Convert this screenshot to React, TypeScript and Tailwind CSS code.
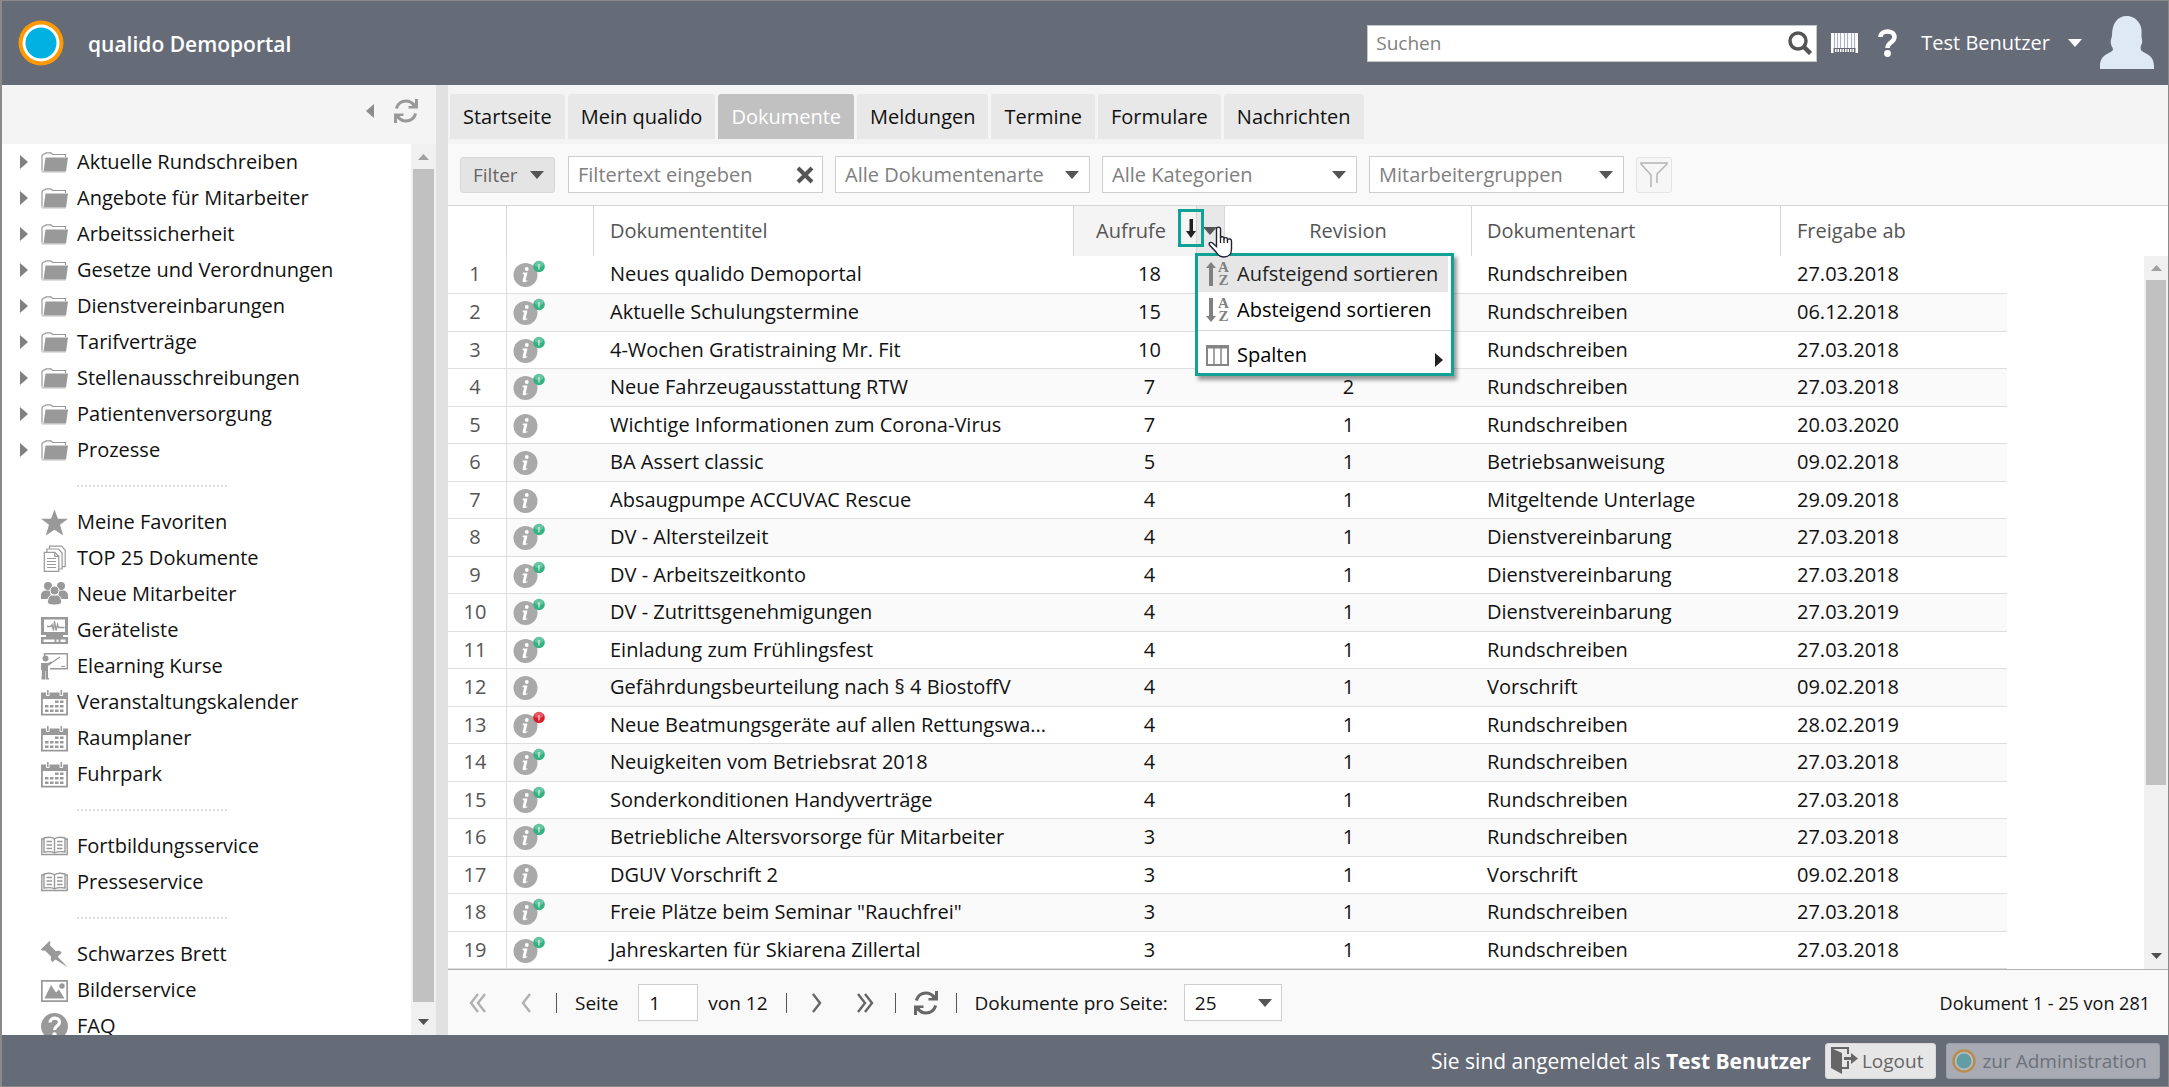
import { useState, type ReactNode } from 'react';

type TreeIconName =
  | 'star'
  | 'documents'
  | 'users'
  | 'device'
  | 'teacher'
  | 'calendar'
  | 'book'
  | 'pin'
  | 'image'
  | 'question';

type TreeItem = { label: string; icon: TreeIconName };

type DocumentRow = {
  title: string;
  views: number;
  revision?: number;
  type: string;
  date: string;
  badge?: 'green' | 'red';
};

const FOLDERS = [
  'Aktuelle Rundschreiben',
  'Angebote für Mitarbeiter',
  'Arbeitssicherheit',
  'Gesetze und Verordnungen',
  'Dienstvereinbarungen',
  'Tarifverträge',
  'Stellenausschreibungen',
  'Patientenversorgung',
  'Prozesse'
];

const TREE_GROUPS: TreeItem[][] = [
  [
    { label: 'Meine Favoriten', icon: 'star' },
    { label: 'TOP 25 Dokumente', icon: 'documents' },
    { label: 'Neue Mitarbeiter', icon: 'users' },
    { label: 'Geräteliste', icon: 'device' },
    { label: 'Elearning Kurse', icon: 'teacher' },
    { label: 'Veranstaltungskalender', icon: 'calendar' },
    { label: 'Raumplaner', icon: 'calendar' },
    { label: 'Fuhrpark', icon: 'calendar' }
  ],
  [
    { label: 'Fortbildungsservice', icon: 'book' },
    { label: 'Presseservice', icon: 'book' }
  ],
  [
    { label: 'Schwarzes Brett', icon: 'pin' },
    { label: 'Bilderservice', icon: 'image' },
    { label: 'FAQ', icon: 'question' }
  ]
];

const TABS = ['Startseite', 'Mein qualido', 'Dokumente', 'Meldungen', 'Termine', 'Formulare', 'Nachrichten'];

const DOCUMENTS: DocumentRow[] = [
  { title: 'Neues qualido Demoportal', views: 18, type: 'Rundschreiben', date: '27.03.2018', badge: 'green' },
  { title: 'Aktuelle Schulungstermine', views: 15, type: 'Rundschreiben', date: '06.12.2018', badge: 'green' },
  { title: '4-Wochen Gratistraining Mr. Fit', views: 10, type: 'Rundschreiben', date: '27.03.2018', badge: 'green' },
  { title: 'Neue Fahrzeugausstattung RTW', views: 7, revision: 2, type: 'Rundschreiben', date: '27.03.2018', badge: 'green' },
  { title: 'Wichtige Informationen zum Corona-Virus', views: 7, revision: 1, type: 'Rundschreiben', date: '20.03.2020' },
  { title: 'BA Assert classic', views: 5, revision: 1, type: 'Betriebsanweisung', date: '09.02.2018' },
  { title: 'Absaugpumpe ACCUVAC Rescue', views: 4, revision: 1, type: 'Mitgeltende Unterlage', date: '29.09.2018' },
  { title: 'DV - Altersteilzeit', views: 4, revision: 1, type: 'Dienstvereinbarung', date: '27.03.2018', badge: 'green' },
  { title: 'DV - Arbeitszeitkonto', views: 4, revision: 1, type: 'Dienstvereinbarung', date: '27.03.2018', badge: 'green' },
  { title: 'DV - Zutrittsgenehmigungen', views: 4, revision: 1, type: 'Dienstvereinbarung', date: '27.03.2019', badge: 'green' },
  { title: 'Einladung zum Frühlingsfest', views: 4, revision: 1, type: 'Rundschreiben', date: '27.03.2018', badge: 'green' },
  { title: 'Gefährdungsbeurteilung nach § 4 BiostoffV', views: 4, revision: 1, type: 'Vorschrift', date: '09.02.2018' },
  { title: 'Neue Beatmungsgeräte auf allen Rettungswa...', views: 4, revision: 1, type: 'Rundschreiben', date: '28.02.2019', badge: 'red' },
  { title: 'Neuigkeiten vom Betriebsrat 2018', views: 4, revision: 1, type: 'Rundschreiben', date: '27.03.2018', badge: 'green' },
  { title: 'Sonderkonditionen Handyverträge', views: 4, revision: 1, type: 'Rundschreiben', date: '27.03.2018', badge: 'green' },
  { title: 'Betriebliche Altersvorsorge für Mitarbeiter', views: 3, revision: 1, type: 'Rundschreiben', date: '27.03.2018', badge: 'green' },
  { title: 'DGUV Vorschrift 2', views: 3, revision: 1, type: 'Vorschrift', date: '09.02.2018' },
  { title: 'Freie Plätze beim Seminar "Rauchfrei"', views: 3, revision: 1, type: 'Rundschreiben', date: '27.03.2018', badge: 'green' },
  { title: 'Jahreskarten für Skiarena Zillertal', views: 3, revision: 1, type: 'Rundschreiben', date: '27.03.2018', badge: 'green' }
];

function FolderIcon() {
  return (
    <svg viewBox="0 0 27 21" className="h-[21px] w-[27px] shrink-0" aria-hidden="true">
      <path d="M1 18V3.500L2.500 2H4l1-1.200h5L11.500 2.500H24.500V5" fill="none" stroke="#999" strokeWidth="1.200" />
      <path d="M4.500 5.500H27L25 19.500H2.500z" fill="#999" />
      <path d="M1 17v3h23.500" fill="none" stroke="#bbb" strokeWidth="1" />
    </svg>
  );
}

const TREE_DRAWINGS: Record<TreeIconName, ReactNode> = {
  star: <path d="M13.500 .5l3.400 9.200H27l-8 6 3.200 10.800-8.700-5.800-8.700 5.800L8 15.700 0 9.700h10.100z" />,
  documents: (
    <g fill="#fff" stroke="#999" strokeWidth="1.200">
      <path d="M8.600 1.200h12l3.600 4v16.500H8.600z" />
      <path d="M6 4h11.500l3.600 4v16H6z" />
      <path d="M3.300 7.300h10.500l4 4v15H3.300z" />
      <path d="M13.800 7.300v4h4M6 13.500h9M6 16.500h9M6 19.500h9M6 22.500h9" fill="none" />
    </g>
  ),
  users: (
    <g>
      <circle cx="7" cy="5" r="4" />
      <circle cx="20" cy="5" r="4" />
      <path d="M0 18v-3.500C0 11 2.500 9.500 5 9.500h4l1 8.500zM27 18v-3.500c0-3.500-2.500-5-5-5h-4L17 18z" />
      <g stroke="#fff" strokeWidth="1">
        <path d="M6.500 21.500C6.500 16 9 14 11.500 14h4c2.500 0 5 2 5 7.500 0 1.500-3 2.500-7 2.500s-7-1-7-2.500z" />
        <circle cx="13.500" cy="9.500" r="4.500" />
      </g>
    </g>
  ),
  device: (
    <g>
      <path fillRule="evenodd" d="M0 0h27v18H0zM3 2.500v12.500h21V2.500z" />
      <path d="M6 9.500h4l1-2 1.500 6L13.500 4l1.500 9.500 1.500-6 1 3h6" fill="none" stroke="#999" strokeWidth="1.300" />
      <path d="M5 18h17v2H5z" />
      <path fillRule="evenodd" d="M0 20h27v7H0zM2.500 22.500V25h11v-2.500zM15.500 22.500V25h2v-2.500zM19.500 22.500V25h5v-2.500z" />
    </g>
  ),
  teacher: (
    <g>
      <path d="M3.500 3V.7h22.800v15H9" fill="none" stroke="#999" strokeWidth="1.400" />
      <path d="M8 11.500L19 4M20 13.500h4" fill="none" stroke="#999" strokeWidth="1.200" />
      <circle cx="4.500" cy="5.500" r="3" />
      <path d="M0 10h7l3-1.500 1 1.500-4 3V25h1v1.500H4.500V18H4v8.500H.5L1 17H0z" />
    </g>
  ),
  calendar: (
    <g>
      <path fillRule="evenodd" d="M0 3.500h27v23H0zM1.800 10v14.700h23.400V10z" />
      <g stroke="#fff" strokeWidth="1">
        <path d="M5.500 .5h2.600v6H5.500zM19 .5h2.600v6H19z" />
      </g>
      <path d="M14 11.500h3.500V14H14zM19 11.500h3.500V14H19zM4 16h3.500v2.500H4zM9 16h3.500v2.500H9zM14 16h3.500v2.500H14zM19 16h3.500v2.500H19zM4 20.500h3.500V23H4zM9 20.500h3.500V23H9zM14 20.500h3.500V23H14zM19 20.500h3.500V23H19z" />
    </g>
  ),
  book: (
    <g fill="none" stroke="#999" strokeWidth="1.400">
      <path d="M3 6H.8v15.500h25.400V6H24" />
      <path d="M3 5c4-1 8-1 10.500.8C16 4 20 4 24 5v14c-4-.6-8-.6-10.500 1C11 18.400 7 18.400 3 19z" />
      <path d="M13.500 5.800V20M5.500 8.500h5.500M5.500 12h5.500M5.500 15.500h5.500M16 8.500h5.500M16 12h5.500M16 15.500h5.500" />
    </g>
  ),
  pin: <path d="M8.500 0l1 1.500-.8 2.500 6 6 4-.3 2 2-4 4L27 26.500 14.500 18.500 11.500 21 9.700 19l.3-3.500L4 9.500l-3 .3L0 8.300z" />,
  image: (
    <g>
      <path fillRule="evenodd" d="M0 3h27v22H0zM1.700 4.700v18.600h23.600V4.700z" />
      <path d="M3.500 21.500L10 8l5 7.500 3-3 5.500 9z" />
      <circle cx="21" cy="9" r="2.700" />
    </g>
  ),
  question: (
    <g>
      <circle cx="13.500" cy="13.500" r="13.500" />
      <path d="M9 9.500c.2-6 10-5.500 9.500 0-.3 3.500-5 3.500-5 7.500" fill="none" stroke="#fff" strokeWidth="3.200" />
      <circle cx="13.500" cy="21.500" r="2.200" fill="#fff" />
    </g>
  )
};

function TreeIcon({ name }: { name: TreeIconName }) {
  return (
    <svg viewBox="0 0 27 27" className="size-[27px] shrink-0" fill="#999" aria-hidden="true">
      {TREE_DRAWINGS[name]}
    </svg>
  );
}

function Caret({ className = 'text-[#555]' }: { className?: string }) {
  return (
    <svg viewBox="0 0 14 8" className={`h-2 w-3.5 shrink-0 ${className}`} fill="currentColor" aria-hidden="true">
      <path d="M0 0h14L7 8z" />
    </svg>
  );
}

function RefreshIcon({ className }: { className: string }) {
  return (
    <svg viewBox="0 0 24 24" className={`size-6 ${className}`} aria-hidden="true">
      <path d="M2.300 9.500C3.800 4.800 7.500 2 12 2c3.300 0 6 1.500 8 4M21.700 14.500C20.200 19.200 16.500 22 12 22c-3.300 0-6-1.500-8-4" fill="none" stroke="currentColor" strokeWidth="3" />
      <path d="M24 0v9.500h-9.500V7h3L21 4V0zM0 24v-9.500h9.500V17h-3L3 20v4z" fill="currentColor" />
    </svg>
  );
}

function Chevrons({ left, double }: { left?: boolean; double?: boolean }) {
  return (
    <svg
      viewBox="0 0 20 20"
      className={`size-5 ${left ? 'text-[#b0b0b0]' : 'text-[#666]'}`}
      fill="none"
      stroke="currentColor"
      strokeWidth="2.400"
      aria-hidden="true"
    >
      {double ? (
        <path d={left ? 'M10 1L3 10l7 9M17 1l-7 9 7 9' : 'M3 1l7 9-7 9M10 1l7 9-7 9'} />
      ) : (
        <path d={left ? 'M14 1L7 10l7 9' : 'M6 1l7 9-7 9'} />
      )}
    </svg>
  );
}

function InfoIcon({ badge }: { badge?: 'green' | 'red' }) {
  return (
    <svg viewBox="0 0 32 28" className="h-7 w-8" aria-hidden="true">
      <circle cx="12.500" cy="15" r="12" fill="#a9a9a9" />
      <circle cx="13.800" cy="9" r="1.900" fill="#fff" />
      <path d="M9.800 12.500h4.700l-1.800 7.500c-.2 1 .5.800 1.600.2l.3.900c-2.500 1.700-5.400 1.500-4.900-.9l1.500-6H9.500z" fill="#fff" />
      {badge && (
        <g>
          <circle cx="26" cy="6.500" r="5.800" fill={badge === 'green' ? '#35b184' : '#d8202c'} />
          <ellipse cx="26" cy="4" rx="4.500" ry="3" fill="#fff" opacity=".25" />
          <path d="M26 4v5.500" stroke="#fff" strokeWidth="1.400" opacity=".7" />
        </g>
      )}
    </svg>
  );
}

function PortalLogo({ className }: { className: string }) {
  return (
    <svg viewBox="0 0 46 46" className={className} aria-hidden="true">
      <circle cx="23" cy="23" r="22.500" fill="#f90" />
      <circle cx="23" cy="23" r="18.500" fill="#fff" />
      <circle cx="23" cy="23" r="15.500" fill="#00b1e1" />
    </svg>
  );
}

function SortIcon({ ascending }: { ascending?: boolean }) {
  return (
    <span className="flex w-[23px] shrink-0 items-center gap-0.5 text-[#808080]">
      <svg viewBox="0 0 10 24" className="h-6 w-2.5 shrink-0" fill="currentColor" aria-hidden="true">
        <path d={ascending ? 'M5 0l5 6H7v18H3V6H0z' : 'M5 24l5-6H7V0H3v18H0z'} />
      </svg>
      <span
        className="flex flex-col items-center font-['Liberation_Serif',serif] text-[15px] leading-[13px] font-bold"
        aria-hidden="true"
      >
        <span>A</span>
        <span>Z</span>
      </span>
    </span>
  );
}

function HandCursor() {
  return (
    <svg viewBox="0 0 26 32" className="h-8 w-[26px]" aria-hidden="true">
      <path
        d="M8.500 3c0-2.500 4-2.500 4 0v9c.5-2 3.500-1.500 3.500.5 1-1.500 3.500-1 3.500 1 1-1.200 4-.7 4 1.500v8c0 5-3 8-7.500 8-4 0-6-1.500-8-5L1.500 19c-1-2 1-3.500 3-2l4 3.500z"
        fill="#fff"
        stroke="#223"
        strokeWidth="1.400"
      />
      <path d="M12.500 12v5M16 13v4M19.500 14v3" stroke="#223" strokeWidth="1.300" />
    </svg>
  );
}

function ComboBox({ label, value, className }: { label: string; value: string; className: string }) {
  return (
    <div className={`relative ${className}`}>
      <select
        aria-label={label}
        className="block h-[37px] w-full appearance-none border border-[#cecece] bg-white pr-8 pl-[9px] text-[20px] text-[#808080] outline-none"
      >
        <option>{value}</option>
      </select>
      <span className="pointer-events-none absolute inset-y-0 right-[11px] flex items-center">
        <Caret />
      </span>
    </div>
  );
}

function ScrollArrow({ up, className }: { up?: boolean; className: string }) {
  return (
    <svg viewBox="0 0 11 6" className={`h-1.5 w-[11px] ${className}`} fill="currentColor" aria-hidden="true">
      <path d={up ? 'M0 6h11L5.500 0z' : 'M0 0h11L5.500 6z'} />
    </svg>
  );
}

function Header() {
  return (
    <header className="flex h-[84px] shrink-0 items-center bg-[#656c78] pr-3.5 pl-4 text-[21px] text-white">
      <PortalLogo className="size-[46px]" />
      <h1 className="mt-0.5 ml-6 flex-1 font-semibold">qualido Demoportal</h1>
      <form className="flex h-[37px] w-[450px] items-center border border-[#c8c8c8] bg-white pr-1" role="search">
        <input
          type="search"
          aria-label="Suchen"
          placeholder="Suchen"
          className="min-w-0 flex-1 pl-2 text-[19px] text-[#222] outline-none placeholder:text-[#808080]"
        />
        <button type="button" aria-label="Suche starten">
          <svg viewBox="0 0 24 24" className="size-6" fill="none" stroke="#555" aria-hidden="true">
            <circle cx="10" cy="10" r="8" strokeWidth="3.500" />
            <path d="M15.500 15.500l7 7" strokeWidth="4.500" />
          </svg>
        </button>
      </form>
      <button type="button" aria-label="Barcode" className="ml-3.5">
        <svg viewBox="0 0 27 20" className="h-5 w-[27px]" aria-hidden="true">
          <path d="M0 0h27v20H0z" fill="#fff" />
          <path d="M3.500 0v15M6.500 0v15M9.500 0v15M13.500 0v15M16.500 0v15M20.500 0v15M23.500 0v15" stroke="#a9b6c2" strokeWidth="1.200" />
          <path d="M2.500 15h22v5h-22z" fill="#656c78" />
          <path d="M4 17.500h19" stroke="#fff" strokeWidth="3" strokeDasharray="1.500 1" />
        </svg>
      </button>
      <button type="button" aria-label="Hilfe" className="ml-5">
        <svg viewBox="0 0 19 28" className="h-7 w-[19px]" aria-hidden="true">
          <path d="M2.500 8C2.500 .5 16.500 .5 16.500 8c0 5.500-7 5-7 11" fill="none" stroke="#fff" strokeWidth="4.500" />
          <circle cx="9.500" cy="24.500" r="3.400" fill="#fff" />
        </svg>
      </button>
      <button type="button" className="ml-6 flex items-center gap-[18px] text-[20px] font-medium">
        Test Benutzer
        <Caret className="text-white" />
      </button>
      <svg viewBox="0 0 54 54" className="ml-[18px] size-[54px]" fill="#dfe9f3" aria-hidden="true">
        <path d="M27 0C17 0 12 8 12 19c0 3-2 5-1 9 .5 3 2 3 2 6-3 4-13 4-13 16v3h54v-3c0-12-10-12-13-16-1-3 0-4 1-7 1-3-1-5-.5-9C43 9 36 0 27 0z" />
      </svg>
    </header>
  );
}

function Sidebar() {
  return (
    <aside className="flex w-[434px] shrink-0 flex-col">
      <div className="flex h-[59px] shrink-0 items-center justify-end gap-5 bg-[#f4f4f4] pr-[18px] pb-2">
        <button type="button" aria-label="Navigation einklappen">
          <svg viewBox="0 0 8 14" className="h-3.5 w-2" fill="#8c8c8c" aria-hidden="true">
            <path d="M8 0v14L0 7z" />
          </svg>
        </button>
        <button type="button" aria-label="Navigation aktualisieren">
          <RefreshIcon className="text-[#999]" />
        </button>
      </div>
      <div className="flex min-h-0 flex-1 bg-white">
        <nav className="min-w-0 flex-1 overflow-hidden text-[20px] text-[#111]" aria-label="Dokumentenbaum">
          <ul>
            {FOLDERS.map((folder) => (
              <li key={folder}>
                <a href="#" className="flex h-9 items-center pl-[18px]">
                  <svg viewBox="0 0 8 14" className="h-3.5 w-2" fill="#808080" aria-hidden="true">
                    <path d="M0 0v14l8-7z" />
                  </svg>
                  <span className="mr-[9px] ml-[13px]">
                    <FolderIcon />
                  </span>
                  {folder}
                </a>
              </li>
            ))}
          </ul>
          {TREE_GROUPS.map((group) => (
            <div key={group[0].label}>
              <div className="flex h-9 items-center pl-[75px]">
                <div className="w-[150px] border-t-2 border-dotted border-[#dcdcdc]" />
              </div>
              <ul>
                {group.map((item) => (
                  <li key={item.label}>
                    <a href="#" className="flex h-9 items-center gap-[9px] pl-[39px]">
                      <TreeIcon name={item.icon} />
                      {item.label}
                    </a>
                  </li>
                ))}
              </ul>
            </div>
          ))}
        </nav>
        <div className="flex w-[25px] flex-col items-center bg-[#f0f0f0]" aria-hidden="true">
          <div className="flex h-[25px] items-center">
            <ScrollArrow up className="text-[#a0a0a0]" />
          </div>
          <div className="w-[21px] flex-1 bg-[#c1c1c1]" />
          <div className="flex h-[33px] items-center pt-1.5">
            <ScrollArrow className="text-[#505050]" />
          </div>
        </div>
      </div>
    </aside>
  );
}

function FilterBar() {
  return (
    <div className="flex h-[62px] shrink-0 items-center gap-3 border-b border-[#d6d6d6] bg-[#f9f9f9] pr-3 pl-3">
      <button
        type="button"
        className="mr-px flex h-9 w-[95px] shrink-0 items-center justify-between rounded-[3px] border border-[#d8d8d8] bg-[#e4e4e4] pr-2.5 pl-3 text-[19px] text-[#666]"
      >
        Filter
        <Caret />
      </button>
      <div className="flex h-[37px] w-[255px] shrink-0 items-center border border-[#cecece] bg-white pr-2 pl-[9px]">
        <input
          type="text"
          aria-label="Filtertext"
          placeholder="Filtertext eingeben"
          className="min-w-0 flex-1 text-[20px] text-[#222] outline-none placeholder:text-[#808080]"
        />
        <button type="button" aria-label="Filtertext löschen">
          <svg viewBox="0 0 18 18" className="size-[18px]" stroke="#555" strokeWidth="4" aria-hidden="true">
            <path d="M2 2l14 14M16 2L2 16" />
          </svg>
        </button>
      </div>
      <ComboBox label="Dokumentenart" value="Alle Dokumentenarte" className="w-[255px]" />
      <ComboBox label="Kategorie" value="Alle Kategorien" className="w-[255px]" />
      <ComboBox label="Mitarbeitergruppe" value="Mitarbeitergruppen" className="w-[255px]" />
      <button
        type="button"
        aria-label="Filter anwenden"
        className="flex h-9 w-9 items-center justify-center rounded-[3px] border border-[#e4e4e4] bg-[#f6f6f6]"
      >
        <svg viewBox="0 0 28 26" className="h-[26px] w-7" fill="none" stroke="#b4b4b4" strokeWidth="1.500" aria-hidden="true">
          <path d="M11 25V13L1 2V1h26v1L17 12v9" />
        </svg>
      </button>
    </div>
  );
}

function ColumnMenu() {
  return (
    <div
      role="menu"
      className="absolute top-[47px] left-[121px] z-10 w-[259px] border-3 border-[#10a294] bg-white text-left text-[20px] font-normal text-black shadow-[3px_4px_4px_rgba(0,0,0,0.4)]"
    >
      <button type="button" role="menuitem" className="flex h-9 w-[250px] items-center gap-2 bg-[#e6e6e6] pl-2 text-[#222]">
        <SortIcon ascending />
        Aufsteigend sortieren
      </button>
      <button type="button" role="menuitem" className="flex h-9 w-full items-center gap-2 pl-2">
        <SortIcon />
        Absteigend sortieren
      </button>
      <div className="mt-0.5 border-t border-[#d6d6d6]" />
      <button type="button" role="menuitem" className="mt-1.5 flex h-9 w-full items-center gap-2 pr-2 pl-2">
        <svg viewBox="0 0 23 21" className="h-[21px] w-[23px]" fill="none" stroke="#858585" aria-hidden="true">
          <path d="M1 1h21v19H1z" strokeWidth="2" />
          <path d="M0 2h23" strokeWidth="3" />
          <path d="M8 3v17M15 3v17" strokeWidth="1.500" />
        </svg>
        <span className="flex-1 text-left">Spalten</span>
        <svg viewBox="0 0 8 14" className="mt-2.5 h-3.5 w-2" fill="#222" aria-hidden="true">
          <path d="M0 0v14l8-7z" />
        </svg>
      </button>
    </div>
  );
}

function DocumentGrid() {
  const headCell = 'border-r border-[#d6d6d6] p-0 font-normal';

  return (
    <div className="flex min-h-0 flex-1 flex-col border-b border-[#b0b0b0] bg-white">
      <div className="flex min-h-0 flex-1">
        <div className="min-w-0 flex-1 overflow-hidden">
          <table className="w-[1559px] table-fixed border-separate border-spacing-0 text-[20px] text-[#111]">
            <colgroup>
              <col className="w-[59px]" />
              <col className="w-[87px]" />
              <col className="w-[480px]" />
              <col className="w-[151px]" />
              <col className="w-[247px]" />
              <col className="w-[309px]" />
              <col />
            </colgroup>
            <thead className="text-[#555]">
              <tr className="h-[50px]">
                <th scope="col" className={headCell} aria-label="Nummer" />
                <th scope="col" className={headCell} aria-label="Information" />
                <th scope="col" className={`${headCell} pl-4 text-left`}>
                  Dokumententitel
                </th>
                <th scope="col" aria-sort="descending" className={`${headCell} bg-[#f4f4f4]`}>
                  <div className="relative flex h-[50px] items-center pl-[22px]">
                    Aufrufe
                    <button
                      type="button"
                      aria-label="Spaltenmenü"
                      className="absolute inset-y-0 right-0 flex w-7 items-center border-l border-[#d6d6d6] bg-[#e8e8e8] pl-1.5"
                    >
                      <Caret />
                    </button>
                    <span className="absolute top-[3px] left-[104px] flex h-[38px] w-[26px] items-center justify-center border-3 border-[#10a294]">
                      <svg viewBox="0 0 10 20" className="h-5 w-2.5" fill="#222" aria-hidden="true">
                        <path d="M5 20l5-7H7V1H3.500v12H0z" />
                      </svg>
                    </span>
                    <ColumnMenu />
                    <span className="absolute top-5 left-[134px] z-20">
                      <HandCursor />
                    </span>
                  </div>
                </th>
                <th scope="col" className={headCell}>
                  Revision
                </th>
                <th scope="col" className={`${headCell} pl-[15px] text-left`}>
                  Dokumentenart
                </th>
                <th scope="col" className="p-0 pl-4 text-left font-normal">
                  Freigabe ab
                </th>
              </tr>
            </thead>
            <tbody className="[&_td]:border-b [&_td]:border-[#dedede] [&_td]:p-0 [&_td]:pb-px">
              {DOCUMENTS.map((doc, index) => (
                <tr key={doc.title} className="h-[37px] even:h-[38px] even:bg-[#fafafa] first:h-[38px]">
                  <td className="border-r bg-white text-center text-[#555]">
                    <div className="pr-1">{index + 1}</div>
                  </td>
                  <td>
                    <span className="flex pl-1.5">
                      <InfoIcon badge={doc.badge} />
                    </span>
                  </td>
                  <td>
                    <div className="pl-4 whitespace-nowrap">{doc.title}</div>
                  </td>
                  <td className="text-center">{doc.views}</td>
                  <td className="text-center">{doc.revision}</td>
                  <td>
                    <div className="pl-[15px]">{doc.type}</div>
                  </td>
                  <td>
                    <div className="pl-4">{doc.date}</div>
                  </td>
                </tr>
              ))}
            </tbody>
          </table>
        </div>
        <div className="mt-[50px] flex w-6 flex-col items-center bg-[#f0f0f0]" aria-hidden="true">
          <div className="flex h-6 items-center">
            <ScrollArrow up className="text-[#a0a0a0]" />
          </div>
          <div className="w-5 flex-[505] bg-[#c1c1c1]" />
          <div className="flex-[158]" />
          <div className="flex h-[26px] items-center">
            <ScrollArrow className="text-[#505050]" />
          </div>
        </div>
      </div>
    </div>
  );
}

function Divider({ className }: { className: string }) {
  return <span className={`h-5 w-px bg-[#555] ${className}`} />;
}

function Pager() {
  const [page, setPage] = useState('1');

  return (
    <div className="flex h-[65px] shrink-0 items-center bg-[#f9f9f9] pr-[18px] pl-5 text-[19px] text-[#111]">
      <button type="button" aria-label="Erste Seite">
        <Chevrons left double />
      </button>
      <button type="button" aria-label="Vorherige Seite" className="ml-7">
        <Chevrons left />
      </button>
      <Divider className="ml-5" />
      <label htmlFor="page" className="ml-[18px]">
        Seite
      </label>
      <input
        id="page"
        value={page}
        onChange={(event) => setPage(event.target.value)}
        className="ml-5 h-[37px] w-[60px] border border-[#cecece] bg-white pl-2.5 outline-none"
      />
      <span className="ml-2.5">von 12</span>
      <Divider className="ml-[18px]" />
      <button type="button" aria-label="Nächste Seite" className="ml-5">
        <Chevrons />
      </button>
      <button type="button" aria-label="Letzte Seite" className="ml-7">
        <Chevrons double />
      </button>
      <Divider className="ml-5" />
      <button type="button" aria-label="Aktualisieren" className="ml-[18px]">
        <RefreshIcon className="text-[#666]" />
      </button>
      <Divider className="ml-[18px]" />
      <label htmlFor="page-size" className="ml-[18px]">
        Dokumente pro Seite:
      </label>
      <div className="relative ml-4 w-[98px]">
        <select
          id="page-size"
          className="block h-[37px] w-full appearance-none border border-[#cecece] bg-white pl-2.5 outline-none"
        >
          <option>25</option>
        </select>
        <span className="pointer-events-none absolute inset-y-0 right-2.5 flex items-center">
          <Caret />
        </span>
      </div>
      <span className="ml-auto text-[18px]">Dokument 1 - 25 von 281</span>
    </div>
  );
}

function Footer() {
  return (
    <footer className="flex h-[51px] shrink-0 items-center justify-end gap-2.5 bg-[#656c78] pr-2 text-[19px]">
      <p className="mr-1 text-[21px] font-medium text-white">
        Sie sind angemeldet als <b>Test Benutzer</b>
      </p>
      <button type="button" className="flex h-9 items-center gap-1 rounded-[3px] border border-[#d8d8d8] bg-[#e6e6e6] pr-3 pl-1 text-[#666]">
        <svg viewBox="0 0 28 28" className="size-7" aria-hidden="true">
          <path d="M1 1h17v6M18 14v7h-6" fill="none" stroke="#666" strokeWidth="2" />
          <path d="M1 1l11 5v21L1 21z" fill="#666" />
          <path d="M14 10h7V6l7 5.500-7 5.500v-4h-7z" fill="#666" />
        </svg>
        Logout
      </button>
      <button
        type="button"
        className="flex h-9 items-center gap-1.5 rounded-[3px] border border-[#9b9fa8] bg-[#a8abb4] pr-3 pl-[5px] text-[#6c7078]"
      >
        <svg viewBox="0 0 24 24" className="size-6" aria-hidden="true">
          <circle cx="12" cy="12" r="10.500" fill="#b8bcc4" stroke="#b98d4e" strokeWidth="2.500" />
          <circle cx="12" cy="12" r="7.500" fill="#619da3" />
        </svg>
        zur Administration
      </button>
    </footer>
  );
}

export default function App() {
  const [activeTab, setActiveTab] = useState('Dokumente');

  return (
    <div className="flex h-screen flex-col overflow-hidden border border-l-2 border-[#8a8a8a] bg-white font-['Open_Sans',sans-serif] leading-6">
      <Header />
      <div className="flex min-h-0 flex-1">
        <Sidebar />
        <div className="w-3 shrink-0 bg-[#e1e1e1]" />
        <main className="flex min-w-0 flex-1 flex-col">
          <div role="tablist" className="flex h-[59px] shrink-0 items-center gap-[3px] bg-[#f4f4f4] pl-0.5 text-[20px] text-[#111]">
            {TABS.map((tab) => (
              <button
                key={tab}
                type="button"
                role="tab"
                aria-selected={tab === activeTab}
                onClick={() => setActiveTab(tab)}
                className={`mt-1 h-[45px] rounded-t-[3px] px-[13px] ${
                  tab === activeTab ? 'bg-[#c1c1c1] font-medium text-white' : 'bg-[#e8e8e8]'
                }`}
              >
                {tab}
              </button>
            ))}
          </div>
          <FilterBar />
          <DocumentGrid />
          <Pager />
        </main>
      </div>
      <Footer />
    </div>
  );
}
